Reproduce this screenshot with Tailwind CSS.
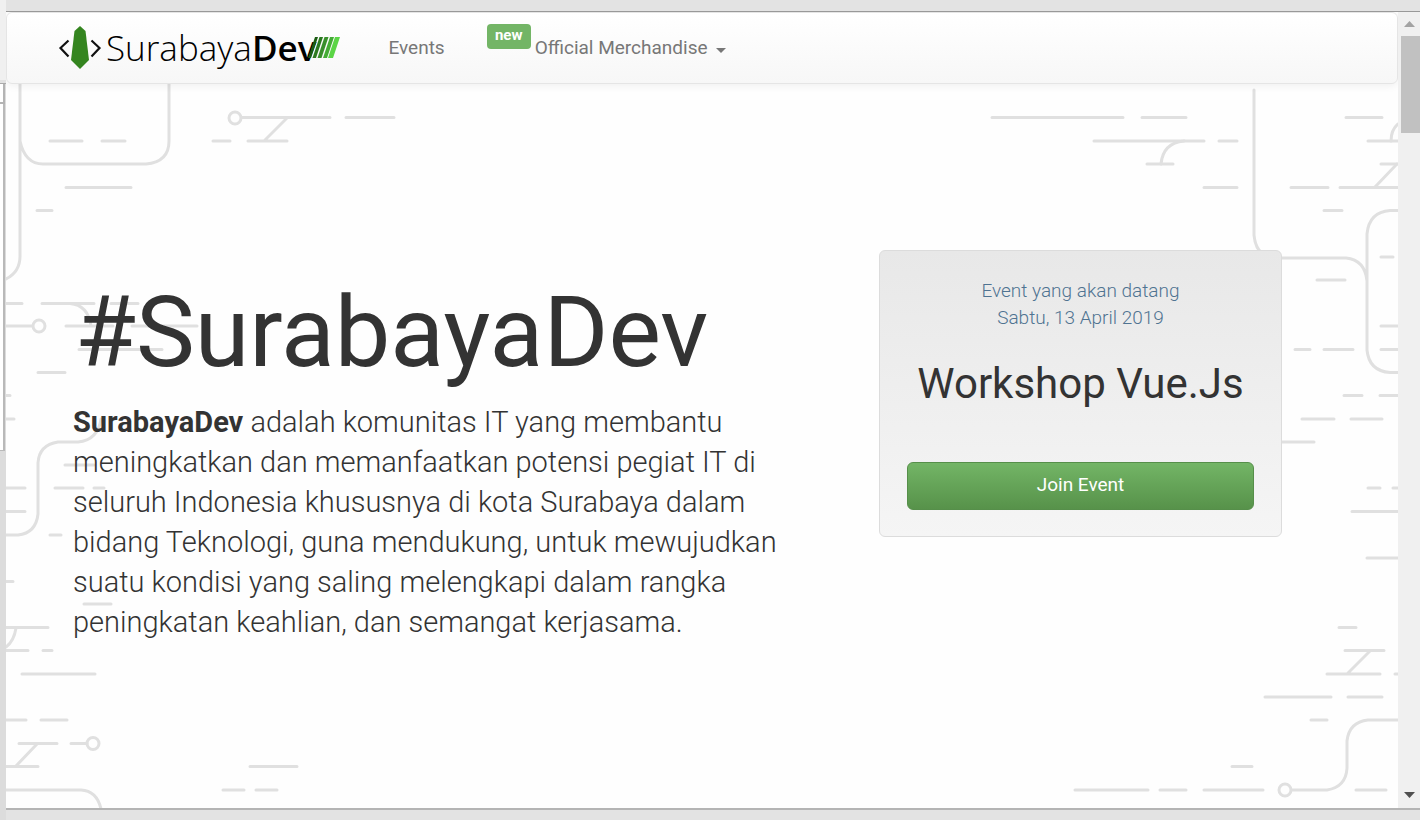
<!DOCTYPE html>
<html lang="id">
<head>
<meta charset="utf-8">
<title>SurabayaDev</title>
<script src="https://cdn.jsdelivr.net/npm/@tailwindcss/browser@4"></script>
</head>
<body class="h-screen overflow-hidden flex bg-[#e3e3e3] font-['Roboto','Liberation_Sans',sans-serif] text-[#333]">
  <!-- Edge of the window behind -->
  <aside class="w-[6px] shrink-0 flex flex-col bg-[#dcdcdc]">
    <div class="h-20 bg-[#f0f0f0]"></div>
    <div class="h-1 bg-[#e2e2e2] border-b border-[#aaa]"></div>
    <div class="h-5 w-[5px] bg-white border-r-2 border-b-2 border-[#b4b4b4]"></div>
    <div class="h-[347px] w-[5px] bg-white border-r-2 border-b border-[#b9b9b9]"></div>
  </aside>

  <div class="flex-1 min-w-0 flex flex-col">
    <div class="h-3 shrink-0 border-b border-[#999]"></div>
    <div class="flex-1 min-h-0 flex">
      <div class="relative flex-1 min-w-0 bg-[#fefefe] overflow-hidden">
        <!-- Circuit pattern -->
        <svg class="absolute inset-0 w-full h-full" fill="none" stroke="#e0e0e0" stroke-width="3" stroke-linecap="round" aria-hidden="true">
          <g transform="translate(-6 -12)">
            <path d="M20 84V256Q20 272 6 279M20 141Q25 164 43 164H146Q169 162 169 141V84"/>
            <path d="M50 141H82M102 141H125M66 187.500H131M37 210.500H52M242 117.500H330M346 117.500H394M213 141H230M248 141H287M265 140L287 118"/>
            <circle cx="235" cy="118" r="6"/>
            <path d="M992 117.500H1123M1142 117.500H1186M1346 117.500H1382M1094 141H1204M1219 141H1237M1368 141H1398M1147 164H1173M1381 164H1398M1204 187.500H1237M1291 187.500H1328M1340 187.500H1398M1324 210.500H1342"/>
            <path d="M1161 164Q1163 143 1184 141M1391 141Q1391 130 1398 124M1375 187L1397 164"/>
            <path d="M1254 90V235Q1256 258 1277 258H1346Q1365 260 1367 281M1398 210.500H1390Q1369 212 1367 234V350Q1369 371 1390 372.500H1398"/>
            <path d="M1381 257H1393M1317 280H1345M1381 326H1398M1295 349.500H1310M1324 349.500H1353M1381 349.500H1398M1344 395.500H1362M1380 395.500H1398M1302 419H1334M1351 419H1382M1281 442H1314M1368 488H1380M1393 488H1398M1352 511.500H1398M1367 558H1398"/>
            <path d="M1339 627.500H1356M1345 650.500H1384M1327 674H1380M1395 674H1398M1348 673L1370 651M1265 697H1331M1348 697H1382M1311 720H1327M1232 766.500H1252M1075 790H1148M1160 790H1186M1204 790H1263M1356 790H1386"/>
            <path d="M1398 720H1368Q1349 722 1347 741V768Q1346 787 1327 790H1292"/>
            <circle cx="1285" cy="790" r="6"/>
            <path d="M6 303.500H22M42 303.500H94M111 303.500H138M6 326H32M66 326H113M132 326H197M70 303.500Q88 305 91 326M79 349.500H162M38 372.500H65M6 395.500H10M6 419H14"/>
            <circle cx="39" cy="326" r="6"/>
            <path d="M101 419Q98 440 78 442H58Q39 445 38 463V514Q36 533 18 535H6"/>
            <path d="M65 465H94M6 488H25M55 488H83M94 488H104M6 511.500H25M50 535H61M6 581.500H13M84 604H111M6 627.500H48M16 628Q14 641 6 647M6 650.500H28M43 650.500H52M22 674H95M6 720H26M41 720H67M19 743.500H57M71 743.500H87M37 744L16 766M6 766.500H38M250 766.500H297M223 790H244M256 790H277M6 790H81Q97 791 101 809"/>
            <circle cx="93" cy="743.500" r="6"/>
          </g>
        </svg>

        <nav class="relative h-18 flex items-center pl-[51px] rounded-md border border-[#e5e5e5] bg-linear-to-b from-white to-[#f7f7f7] shadow-[0_1px_10px_rgba(0,0,0,0.07)] text-[19px] text-[#777]">
          <a href="#" class="flex items-center" aria-label="SurabayaDev">
            <svg class="w-[44px] h-[46px]" viewBox="0 0 44 46" aria-hidden="true">
              <path d="M22 1L27.500 6L31 35L22 44L13 35L16.500 6Z" fill="#34851f"/>
              <path d="M10.500 15.500L2.500 23L10.500 31.500M33.500 15.500L41.500 23L33.500 31.500" fill="none" stroke="#111" stroke-width="2.200"/>
            </svg>
            <span class="pl-1 text-[35px] leading-[46px] text-black font-light font-['Open_Sans','Noto_Sans',sans-serif]">Surabaya<b class="font-semibold">Dev</b></span>
            <svg class="-ml-2 w-8 h-[22px]" viewBox="0 0 32 22" aria-hidden="true">
              <path d="M7 0H10L3 21H0Z" fill="#1b5c12"/><path d="M11.500 0H15L8 21H4.500Z" fill="#2b7a20"/><path d="M16.500 0H20.500L13.500 21H9.500Z" fill="#388f2b"/><path d="M22 0H26L19 21H15Z" fill="#44ac35"/><path d="M27 0H32L25 21H20Z" fill="#5bd546"/>
            </svg>
          </a>
          <a href="#" class="ml-12">Events</a>
          <a href="#" class="ml-[42px] flex items-center gap-1">
            <span class="mb-6 h-[25px] w-[44px] rounded bg-[#73b566] text-center text-[15px] leading-[23px] font-bold text-white">new</span>
            <span>Official Merchandise</span>
            <span class="ml-1 mt-1 border-x-[5px] border-t-[5px] border-x-transparent border-t-[#777]"></span>
          </a>
        </nav>

        <main class="relative flex pl-[67px] pr-[116px]">
          <section class="flex-1 pt-[193px]">
            <h1 class="pl-[2px] text-[99px] leading-[110px]">#SurabayaDev</h1>
            <p class="mt-[15px] w-[720px] text-[29px] leading-[40px] font-light"><b class="font-bold">SurabayaDev</b> adalah komunitas IT yang membantu meningkatkan dan memanfaatkan potensi pegiat IT di seluruh Indonesia khususnya di kota Surabaya dalam bidang Teknologi, guna mendukung, untuk mewujudkan suatu kondisi yang saling melengkapi dalam rangka peningkatan keahlian, dan semangat kerjasama.</p>
          </section>
          <section class="mt-[166px] w-[403px] h-[287px] flex flex-col px-[27px] py-[26px] rounded-md border border-[#dcdcdc] bg-linear-to-b from-[#e8e8e8] to-[#f5f5f5] text-center">
            <p class="text-[19px] leading-[27px] font-light text-[#4f7391]">Event yang akan datang<br>Sabtu, 13 April 2019</p>
            <h2 class="mt-7 text-[42px] leading-[50px]">Workshop Vue.Js</h2>
            <button type="button" class="mt-auto h-12 rounded-md border border-[#568f4a] bg-linear-to-b from-[#73b566] to-[#57924a] text-[19px] leading-7 pb-[2px] text-white">Join Event</button>
          </section>
        </main>
      </div>

      <!-- Scrollbar -->
      <div class="w-[22px] shrink-0 bg-[#f0f0f0] flex flex-col items-end" aria-hidden="true">
        <svg class="h-6 w-[19px] shrink-0" viewBox="0 0 19 24"><path d="M3 15L8.500 9L14 15Z" fill="#a3a3a3"/></svg>
        <div class="h-[97px] w-[19px] bg-[#c1c1c1]"></div>
        <svg class="mt-auto h-6 w-[19px] shrink-0" viewBox="0 0 19 24"><path d="M3 8L8.500 14L14 8Z" fill="#505050"/></svg>
      </div>
    </div>
    <footer class="h-3 shrink-0 border-t-2 border-[#b4b4b4]"></footer>
  </div>
</body>
</html>
